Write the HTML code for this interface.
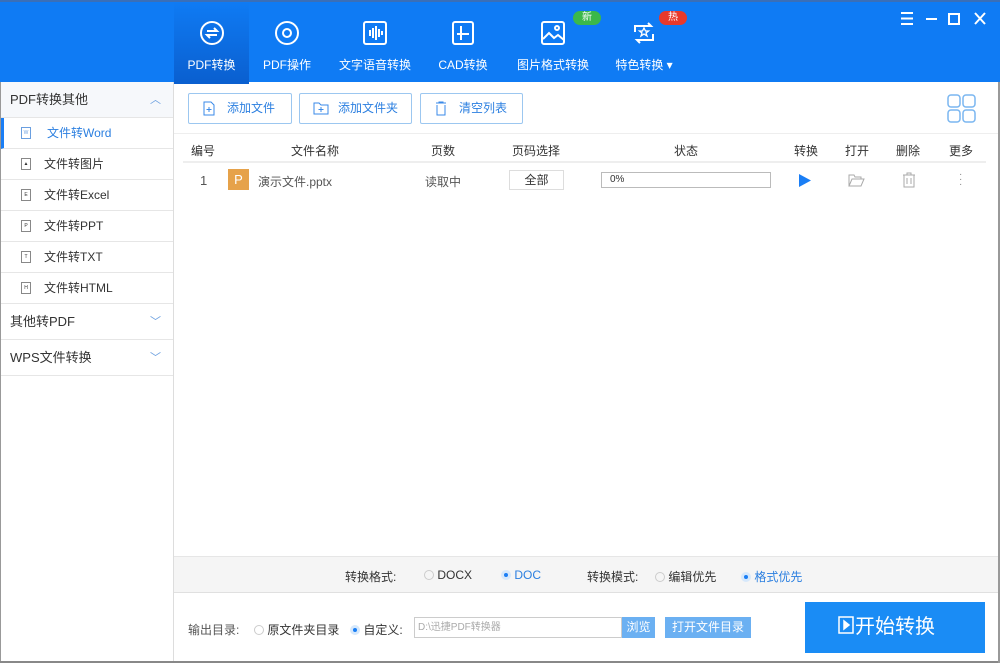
<html><head><style>
*{margin:0;padding:0;box-sizing:border-box}
body{width:1000px;height:663px;overflow:hidden;font-family:"Liberation Sans","Noto Sans CJK SC",sans-serif;font-size:12px;color:#333;background:#fff;position:relative}
.hd{position:absolute;left:0;top:0;width:1000px;height:82px;background:#0f7bf4;border-top:2px solid #3a6fb8}
.tab{position:absolute;top:0;height:82px;color:#fff;font-size:12px;text-align:center}
.tab .lbl{position:absolute;top:54px;left:0;right:0;white-space:nowrap}
.tab svg{position:absolute;top:18px;left:50%;margin-left:-13px}
.act{background:linear-gradient(#0f7bf4,#0a5fcf)}
.badge{position:absolute;top:9px;height:14px;width:28px;border-radius:7px;color:#fff;font-size:10px;line-height:14px;text-align:center}
.sb{position:absolute;left:0;top:82px;width:174px;height:581px;border-right:1px solid #ddd;border-left:1px solid #999}
.sbh{height:36px;line-height:36px;padding-left:9px;font-size:13px;background:#f6f8fb;border-bottom:1px solid #e6e6e6;position:relative}
.sbh i{position:absolute;right:12px;top:0;color:#6a9fe0;font-style:normal;font-size:11px}
.it{height:31px;line-height:30px;padding-left:43px;font-size:12px;border-bottom:1px solid #e6e6e6;position:relative}
.it b{position:absolute;left:20px;top:9px;width:10px;height:12px;border:1px solid #888;font-size:5px;line-height:10px;text-align:center;font-weight:normal}
.btn{position:absolute;top:93px;height:31px;border:1px solid #9cc7f0;border-radius:2px;color:#2b7fe0;font-size:12px;line-height:29px;padding-left:38px}
.th{position:absolute;top:142px;font-size:12px;color:#333}
.hline{position:absolute;top:161px;height:2px;background:#eee}
</style></head><body>
<div class="hd">
<div class="tab act" style="left:174px;width:75px"><svg width="26" height="26" viewBox="0 0 26 26" fill="none" stroke="#fff" stroke-width="2"><circle cx="13" cy="13" r="11"/><path d="M8 11h10l-3-3M18 15H8l3 3"/></svg><div class="lbl">PDF转换</div></div>
<div class="tab" style="left:252px;width:70px"><svg width="26" height="26" viewBox="0 0 26 26" fill="none" stroke="#fff" stroke-width="2"><circle cx="13" cy="13" r="11"/><circle cx="13" cy="13" r="4"/></svg><div class="lbl">PDF操作</div></div>
<div class="tab" style="left:334px;width:82px"><svg width="26" height="26" viewBox="0 0 26 26" fill="none" stroke="#fff" stroke-width="2"><rect x="2" y="2" width="22" height="22" rx="2"/><path d="M8 10v6M11 8v10M14 6v14M17 9v8M20 11v4"/></svg><div class="lbl">文字语音转换</div></div>
<div class="tab" style="left:430px;width:66px"><svg width="26" height="26" viewBox="0 0 26 26" fill="none" stroke="#fff" stroke-width="2"><rect x="3" y="2" width="20" height="22" rx="2"/><path d="M11 6v14M7 14h12"/></svg><div class="lbl">CAD转换</div></div>
<div class="tab" style="left:510px;width:86px"><svg width="26" height="26" viewBox="0 0 26 26" fill="none" stroke="#fff" stroke-width="2"><rect x="2" y="2" width="22" height="22" rx="2"/><path d="M3 19l6-6 5 5 4-3 6 5"/><circle cx="17" cy="8" r="2"/></svg><div class="lbl">图片格式转换</div></div>
<div class="tab" style="left:608px;width:72px"><svg width="26" height="26" viewBox="0 0 26 26" fill="none" stroke="#fff" stroke-width="2"><path d="M4 12V6h16l-3-3M22 14v6H6l3 3"/><path d="M13 8l1.5 3h3l-2.5 2 1 3-3-2-3 2 1-3-2.5-2h3z" stroke-width="1.3"/></svg><div class="lbl">特色转换 ▾</div></div>
<div class="badge" style="left:573px;background:#3bb84a">新</div>
<div class="badge" style="left:659px;background:#e8392b">热</div>
<svg style="position:absolute;left:899px;top:9px" width="90" height="16" fill="none" stroke="#fff" stroke-width="2"><path d="M2 2h12M2 7.5h12M2 13h12M27 8h11M50 3h10v10H50zM76 2l10 11M86 2L76 13"/></svg>
</div>
<div class="sb">
<div class="sbh" style="color:#333">PDF转换其他<i>︿</i></div>
<div class="it" style="color:#2b7fe0;border-left:3px solid #1a7ef5"><b style="left:17px;border-color:#6a9fe0;color:#6a9fe0">W</b>文件转Word</div>
<div class="it"><b>▲</b>文件转图片</div>
<div class="it"><b>E</b>文件转Excel</div>
<div class="it"><b>P</b>文件转PPT</div>
<div class="it"><b>T</b>文件转TXT</div>
<div class="it"><b>H</b>文件转HTML</div>
<div class="sbh" style="background:#fff">其他转PDF<i>﹀</i></div>
<div class="sbh" style="background:#fff">WPS文件转换<i>﹀</i></div>
</div>
<div class="btn" style="left:188px;width:104px"><svg style="position:absolute;left:14px;top:7px" width="12" height="15" fill="none" stroke="#3a8ae8"><path d="M1 1h7l3 3v10H1zM6 6v5M3.5 8.5h5"/></svg>添加文件</div>
<div class="btn" style="left:299px;width:113px"><svg style="position:absolute;left:13px;top:8px" width="16" height="13" fill="none" stroke="#3a8ae8"><path d="M1 1h5l2 2h7v9H1zM8 5v5M5.5 7.5h5"/></svg>添加文件夹</div>
<div class="btn" style="left:420px;width:103px"><svg style="position:absolute;left:14px;top:7px" width="12" height="15" fill="none" stroke="#3a8ae8"><path d="M1 2h10M4 2V1h4v1M2 4v10h8V4"/></svg>清空列表</div>
<svg style="position:absolute;left:947px;top:94px" width="30" height="30" fill="none" stroke="#7ab6f0" stroke-width="1.5"><rect x="1" y="1" width="12" height="12" rx="3"/><rect x="16" y="1" width="12" height="12" rx="3"/><rect x="1" y="16" width="12" height="12" rx="3"/><rect x="16" y="16" width="12" height="12" rx="3"/></svg>
<div style="position:absolute;left:174px;top:133px;width:826px;height:1px;background:#eee"></div>
<div class="th" style="left:191px">编号</div><div class="th" style="left:291px">文件名称</div><div class="th" style="left:431px">页数</div><div class="th" style="left:512px">页码选择</div><div class="th" style="left:674px">状态</div><div class="th" style="left:794px">转换</div><div class="th" style="left:845px">打开</div><div class="th" style="left:896px">删除</div><div class="th" style="left:949px">更多</div>
<div class="hline" style="left:183px;width:803px"></div>
<div style="position:absolute;left:200px;top:173px;font-size:13px;color:#555">1</div>
<div style="position:absolute;left:228px;top:169px;width:21px;height:21px;background:#e6a24a;color:#fff;text-align:center;line-height:21px;font-size:13px">P</div>
<div style="position:absolute;left:258px;top:173px;color:#555">演示文件.pptx</div>
<div style="position:absolute;left:425px;top:173px;color:#555">读取中</div>
<div style="position:absolute;left:509px;top:170px;width:55px;height:20px;border:1px solid #ddd;text-align:center;line-height:18px">全部</div>
<div style="position:absolute;left:601px;top:172px;width:170px;height:16px;border:1px solid #bbb;font-size:10px;line-height:14px;padding-left:8px">0%</div>
<svg style="position:absolute;left:799px;top:174px" width="12" height="13"><path d="M0 0L12 6.5 0 13z" fill="#1a7ef5"/></svg>
<svg style="position:absolute;left:848px;top:173px" width="17" height="14" fill="none" stroke="#aaa"><path d="M1 13V2h5l1 2h6v2M1 13l3-7h12l-3 7z"/></svg>
<svg style="position:absolute;left:902px;top:172px" width="14" height="16" fill="none" stroke="#aaa"><path d="M1 3h12M5 3V1h4v2M2 3v12h10V3M5 6v6M9 6v6"/></svg>
<div style="position:absolute;left:959px;top:172px;width:3px;color:#888;font-size:10px;line-height:5px">·<br>·<br>·</div>
<div style="position:absolute;left:174px;top:556px;width:826px;height:37px;background:#f5f5f5;border-top:1px solid #e6e6e6;border-bottom:1px solid #e0e0e0"></div>
<div style="position:absolute;left:345px;top:568px">转换格式:</div>
<div style="position:absolute;left:424px;top:568px"><span style="display:inline-block;width:10px;height:10px;border:1px solid #ccc;border-radius:50%;vertical-align:-1px"></span> DOCX</div>
<div style="position:absolute;left:501px;top:568px;color:#2b7fe0"><span style="display:inline-block;width:10px;height:10px;border:3px solid #d6e8fb;background:#1a7ef5;border-radius:50%;vertical-align:-1px"></span> DOC</div>
<div style="position:absolute;left:587px;top:568px">转换模式:</div>
<div style="position:absolute;left:655px;top:568px"><span style="display:inline-block;width:10px;height:10px;border:1px solid #ccc;border-radius:50%;vertical-align:-1px"></span> 编辑优先</div>
<div style="position:absolute;left:741px;top:568px;color:#2b7fe0"><span style="display:inline-block;width:10px;height:10px;border:3px solid #d6e8fb;background:#1a7ef5;border-radius:50%;vertical-align:-1px"></span> 格式优先</div>
<div style="position:absolute;left:188px;top:621px;color:#555">输出目录:</div>
<div style="position:absolute;left:254px;top:621px"><span style="display:inline-block;width:10px;height:10px;border:1px solid #ccc;border-radius:50%;vertical-align:-1px"></span> 原文件夹目录</div>
<div style="position:absolute;left:350px;top:621px"><span style="display:inline-block;width:10px;height:10px;border:3px solid #d6e8fb;background:#1a7ef5;border-radius:50%;vertical-align:-1px"></span> 自定义:</div>
<div style="position:absolute;left:414px;top:617px;width:208px;height:21px;border:1px solid #ccc;color:#aaa;font-size:10px;line-height:19px;padding-left:3px">D:\迅捷PDF转换器</div>
<div style="position:absolute;left:622px;top:617px;width:33px;height:21px;background:#6bb0f2;color:#fff;text-align:center;line-height:21px">浏览</div>
<div style="position:absolute;left:665px;top:617px;width:86px;height:21px;background:#6bb0f2;color:#fff;text-align:center;line-height:21px">打开文件目录</div>
<div style="position:absolute;left:805px;top:602px;width:180px;height:51px;background:#1a8cf5;color:#fff;font-size:20px;line-height:51px;padding-left:50px">开始转换</div>
<svg style="position:absolute;left:838px;top:616px" width="16" height="18" fill="none" stroke="#fff" stroke-width="1.5"><rect x="1" y="1" width="14" height="16"/><path d="M6 5l5 4-5 4z" fill="#fff"/></svg>
<div style="position:absolute;left:0;top:661px;width:1000px;height:2px;background:#888"></div>
<div style="position:absolute;left:998px;top:82px;width:2px;height:581px;background:#999"></div>
</body></html>
